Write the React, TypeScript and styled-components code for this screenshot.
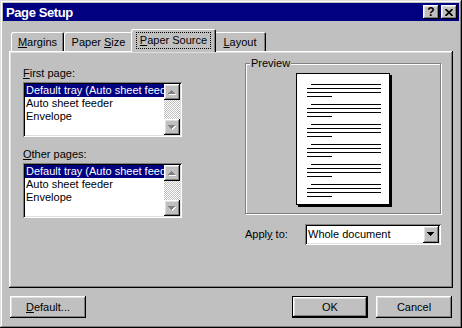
import React, { FC } from 'react';
import styled, { createGlobalStyle, css } from 'styled-components';

const colours = {
  face: '#c0c0c0',
  light: '#dfdfdf',
  shadow: '#808080',
  dark: '#000000',
  white: '#ffffff',
  navy: '#000080',
};

const GlobalStyle = createGlobalStyle`
  html, body {
    margin: 0;
    padding: 0;
    background: ${colours.face};
  }
  body {
    font-family: "Liberation Sans", Arial, sans-serif;
    font-size: 11px;
    color: #000;
  }
  * { box-sizing: border-box; }
`;

const raised = css`
  box-shadow: inset -1px -1px ${colours.dark}, inset 1px 1px ${colours.white},
    inset -2px -2px ${colours.shadow}, inset 2px 2px ${colours.light};
`;

const sunken = css`
  box-shadow: inset 1px 1px ${colours.shadow}, inset -1px -1px ${colours.white},
    inset 2px 2px ${colours.dark}, inset -2px -2px ${colours.light};
`;

const Window = styled.div`
  width: 462px;
  height: 328px;
  padding: 3px;
  background: ${colours.face};
  display: flex;
  flex-direction: column;
  box-shadow: inset -1px -1px ${colours.dark}, inset 1px 1px ${colours.light},
    inset -2px -2px ${colours.shadow}, inset 2px 2px ${colours.white};
`;

const TitleBar = styled.div`
  height: 18px;
  background: ${colours.navy};
  color: ${colours.white};
  display: flex;
  align-items: center;
  padding: 0 2px 0 3px;
  font-size: 13px;
  font-weight: bold;
  letter-spacing: -0.4px;
`;

const TitleButtons = styled.div`
  margin-left: auto;
  display: flex;
  gap: 2px;
`;

const TitleButton = styled.div`
  width: 16px;
  height: 14px;
  background: ${colours.face};
  color: #000;
  display: flex;
  align-items: center;
  justify-content: center;
  font-size: 12px;
  font-weight: bold;
  letter-spacing: 0;
  line-height: 14px;
  ${raised};
`;

const Content = styled.div`
  padding: 0 6px;
  display: flex;
  flex-direction: column;
`;

const TabRow = styled.div`
  margin-top: 8px;
  height: 22px;
  padding-left: 2px;
  display: flex;
  align-items: flex-end;
  position: relative;
  z-index: 1;
`;

const Tab = styled.div<{ $width: number; $active?: boolean }>`
  width: ${(p) => p.$width}px;
  height: ${(p) => (p.$active ? 23 : 19)}px;
  margin: ${(p) => (p.$active ? '0 -2px -1px' : '0')};
  position: relative;
  z-index: ${(p) => (p.$active ? 2 : 1)};
  background: ${colours.face};
  border-radius: 2px 2px 0 0;
  display: flex;
  align-items: center;
  justify-content: center;
  padding-top: ${(p) => (p.$active ? 0 : 1)}px;
  box-shadow: inset 1px 1px ${colours.white}, inset -1px 0 ${colours.dark},
    inset -2px 0 ${colours.shadow};
`;

const FocusLabel = styled.span`
  border: 1px dotted #000;
  padding: 1px 3px 1px 3px;
  line-height: 13px;
  margin-top: -1px;
`;

const Panel = styled.div`
  height: 237px;
  padding: 12px 0 0 14px;
  display: flex;
  ${raised};
`;

const LeftColumn = styled.div`
  width: 159px;
  padding-top: 4px;
  display: flex;
  flex-direction: column;
`;

const FieldLabel = styled.div<{ $top?: number }>`
  height: 13px;
  line-height: 13px;
  margin-top: ${(p) => p.$top ?? 0}px;
  margin-bottom: 2px;
`;

const ListBox = styled.div`
  width: 159px;
  height: 55px;
  padding: 2px;
  background: ${colours.white};
  display: flex;
  ${sunken};
`;

const ListItems = styled.div`
  flex: 1;
  overflow: hidden;
`;

const ListItem = styled.div<{ $selected?: boolean }>`
  height: 13px;
  line-height: 13px;
  padding-left: 1px;
  white-space: nowrap;
  overflow: hidden;
  background: ${(p) => (p.$selected ? colours.navy : 'transparent')};
  color: ${(p) => (p.$selected ? colours.white : '#000')};
`;

const ScrollBar = styled.div`
  width: 16px;
  display: flex;
  flex-direction: column;
`;

const ScrollButton = styled.div`
  width: 16px;
  height: 16px;
  background: ${colours.face};
  ${raised};
`;

const ScrollTrack = styled.div`
  flex: 1;
  background-image: conic-gradient(
    ${colours.white} 25%,
    ${colours.face} 0 50%,
    ${colours.white} 0 75%,
    ${colours.face} 0
  );
  background-size: 2px 2px;
`;

const RightColumn = styled.div`
  width: 197px;
  margin-left: 63px;
  display: flex;
  flex-direction: column;
`;

const GroupBox = styled.div`
  position: relative;
  width: 196px;
  height: 151px;
  border: 1px solid ${colours.shadow};
  box-shadow: inset 1px 1px ${colours.white}, 1px 1px 0 ${colours.white};
  padding-top: 9px;
  display: flex;
  justify-content: center;
`;

const Legend = styled.span`
  position: absolute;
  top: -7px;
  left: 4px;
  padding: 0 1px;
  line-height: 13px;
  background: ${colours.face};
`;

const Page = styled.div`
  width: 94px;
  height: 132px;
  background: ${colours.white};
  border: 1px solid #000;
  box-shadow: 2px 2px 0 #000;
`;

const ApplyRow = styled.div`
  margin-top: 10px;
  display: flex;
  align-items: center;
`;

const ApplyLabel = styled.div`
  width: 60px;
  line-height: 13px;
`;

const Combo = styled.div`
  width: 136px;
  height: 21px;
  padding: 2px;
  background: ${colours.white};
  display: flex;
  ${sunken};
`;

const ComboText = styled.div`
  flex: 1;
  line-height: 17px;
  padding-left: 1px;
`;

const DropButton = styled.div`
  width: 16px;
  height: 17px;
  background: ${colours.face};
  ${raised};
`;

const ButtonRow = styled.div`
  margin-top: 8px;
  padding: 0 1px;
  display: flex;
  gap: 8px;
`;

const Button = styled.div<{ $default?: boolean }>`
  width: 76px;
  height: 22px;
  background: ${colours.face};
  display: flex;
  align-items: center;
  justify-content: center;
  line-height: 13px;
  ${(p) =>
    p.$default
      ? css`
          box-shadow: inset 0 0 0 1px #000, inset -2px -2px ${colours.dark},
            inset 2px 2px ${colours.white}, inset -3px -3px ${colours.shadow},
            inset 3px 3px ${colours.light};
        `
      : raised};
`;

const Spacer = styled.div`
  flex: 1;
`;

const rows = (dir: 'up' | 'down') =>
  dir === 'up'
    ? [[7, 6, 1], [6, 7, 3], [5, 8, 5], [4, 9, 7]]
    : [[4, 6, 7], [5, 7, 5], [6, 8, 3], [7, 9, 1]];

const Arrow: FC<{ dir: 'up' | 'down'; disabled?: boolean; w?: number; h?: number }> = ({
  dir,
  disabled,
  w = 16,
  h = 16,
}) => (
  <svg width={w} height={h} shapeRendering="crispEdges" style={{ display: 'block' }}>
    {disabled &&
      rows(dir).map(([x, y, len]) => (
        <rect key={'s' + y} x={x + 1} y={y + 1} width={len} height={1} fill={colours.white} />
      ))}
    {rows(dir).map(([x, y, len]) => (
      <rect key={y} x={x} y={y} width={len} height={1} fill={disabled ? colours.shadow : '#000'} />
    ))}
  </svg>
);

const CloseGlyph: FC = () => (
  <svg width="8" height="7" viewBox="0 0 8 7" style={{ display: 'block' }}>
    <path d="M0.5 0 L7.5 7 M7.5 0 L0.5 7" stroke="#000" strokeWidth="1.7" />
  </svg>
);

const PagePreview: FC = () => {
  const groups = [0, 1, 2, 3, 4, 5];
  return (
    <svg width="92" height="130" shapeRendering="crispEdges" style={{ display: 'block' }}>
      {groups.map((g) => {
        const y = 10 + g * 20;
        return (
          <g key={g} fill="#000">
            <rect x={14} y={y} width={70} height={1} />
            <rect x={10} y={y + 4} width={74} height={1} />
            <rect x={10} y={y + 8} width={74} height={1} />
            <rect x={10} y={y + 12} width={25} height={1} />
          </g>
        );
      })}
    </svg>
  );
};

const trays = ['Default tray (Auto sheet feeder)', 'Auto sheet feeder', 'Envelope'];

const TrayList: FC = () => (
  <ListBox>
    <ListItems>
      {trays.map((t, i) => (
        <ListItem key={t} $selected={i === 0}>
          {t}
        </ListItem>
      ))}
    </ListItems>
    <ScrollBar>
      <ScrollButton>
        <Arrow dir="up" disabled />
      </ScrollButton>
      <ScrollTrack />
      <ScrollButton>
        <Arrow dir="down" disabled />
      </ScrollButton>
    </ScrollBar>
  </ListBox>
);

const App: FC = () => {
  return (
    <>
      <GlobalStyle />
      <Window>
        <TitleBar>
          Page Setup
          <TitleButtons>
            <TitleButton>?</TitleButton>
            <TitleButton>
              <CloseGlyph />
            </TitleButton>
          </TitleButtons>
        </TitleBar>

        <Content>
          <TabRow>
            <Tab $width={53}>
              <span>
                <u>M</u>argins
              </span>
            </Tab>
            <Tab $width={69}>
              <span>
                Paper <u>S</u>ize
              </span>
            </Tab>
            <Tab $width={85} $active>
              <FocusLabel>
                <u>P</u>aper Source
              </FocusLabel>
            </Tab>
            <Tab $width={52}>
              <span>
                <u>L</u>ayout
              </span>
            </Tab>
          </TabRow>

          <Panel>
            <LeftColumn>
              <FieldLabel>
                <u>F</u>irst page:
              </FieldLabel>
              <TrayList />
              <FieldLabel $top={11}>
                <u>O</u>ther pages:
              </FieldLabel>
              <TrayList />
            </LeftColumn>

            <RightColumn>
              <GroupBox>
                <Legend>Preview</Legend>
                <Page>
                  <PagePreview />
                </Page>
              </GroupBox>
              <ApplyRow>
                <ApplyLabel>
                  Appl<u>y</u> to:
                </ApplyLabel>
                <Combo>
                  <ComboText>Whole document</ComboText>
                  <DropButton>
                    <Arrow dir="down" h={17} />
                  </DropButton>
                </Combo>
              </ApplyRow>
            </RightColumn>
          </Panel>

          <ButtonRow>
            <Button>
              <span>
                <u>D</u>efault...
              </span>
            </Button>
            <Spacer />
            <Button $default>OK</Button>
            <Button>Cancel</Button>
          </ButtonRow>
        </Content>
      </Window>
    </>
  );
};

export default App;
